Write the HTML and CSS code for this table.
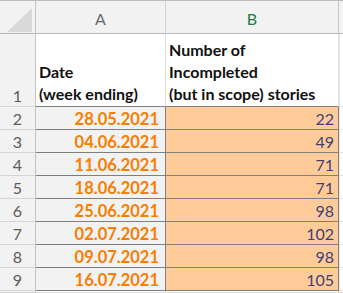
FILE: index.html
```html
<!DOCTYPE html>
<html>
<head>
<meta charset="utf-8">
<link rel="stylesheet" href="styles.css">
</head>
<body>
<div class="sheet">
  <div class="corner"><span class="tri"></span></div>
  <div class="colhead">A</div>
  <div class="colhead sel">B</div>
  <div class="colhead rest"></div>

  <div class="rowhead">1</div>
  <div class="cell title">Date<br>(week ending)</div>
  <div class="cell title">Number of<br>Incompleted<br>(but in scope) stories</div>
  <div class="cell rest"></div>

  <div class="rowhead">2</div><div class="cell calc">28.05.2021</div><div class="cell input">22</div><div class="cell rest"></div>
  <div class="rowhead">3</div><div class="cell calc">04.06.2021</div><div class="cell input">49</div><div class="cell rest"></div>
  <div class="rowhead">4</div><div class="cell calc">11.06.2021</div><div class="cell input">71</div><div class="cell rest"></div>
  <div class="rowhead">5</div><div class="cell calc">18.06.2021</div><div class="cell input">71</div><div class="cell rest"></div>
  <div class="rowhead">6</div><div class="cell calc">25.06.2021</div><div class="cell input">98</div><div class="cell rest"></div>
  <div class="rowhead">7</div><div class="cell calc">02.07.2021</div><div class="cell input">102</div><div class="cell rest"></div>
  <div class="rowhead">8</div><div class="cell calc">09.07.2021</div><div class="cell input">98</div><div class="cell rest"></div>
  <div class="rowhead">9</div><div class="cell calc">16.07.2021</div><div class="cell input">105</div><div class="cell rest"></div>

  <div class="rowhead"></div><div class="cell blank"></div><div class="cell blank"></div><div class="cell rest"></div>
</div>
</body>
</html>
```
FILE: styles.css
```css
html, body {
  margin: 0;
  padding: 0;
  background: #ffffff;
}
body {
  font-family: Lato, "Liberation Sans", sans-serif;
  overflow: hidden;
}
.sheet {
  display: grid;
  grid-template-columns: 36px 130px 173px 4px;
  grid-template-rows: 34px 73px repeat(8, 23px) 2px;
  width: 343px;
  height: 293px;
  overflow: hidden;
}
.sheet > div {
  box-sizing: border-box;
}
.corner {
  background: #f2f2f2;
  border-top: 1px solid #bdbdbd;
  border-right: 1px solid #c4c4c4;
  border-bottom: 1px solid #b9b9b9;
  position: relative;
}
.tri {
  position: absolute;
  left: 7px;
  top: 7px;
  width: 25px;
  height: 24px;
  background: #d9d9d9;
  clip-path: polygon(100% 0, 100% 100%, 0 100%);
}
.colhead {
  background: #f2f2f2;
  border-top: 1px solid #bdbdbd;
  border-right: 1px solid #d4d4d4;
  border-bottom: 1px solid #b9b9b9;
  display: flex;
  align-items: center;
  justify-content: center;
  font-size: 16px;
  color: #6b6b6b;
  padding-top: 2px;
}
.colhead.sel {
  color: #1f7a45;
  border-right-color: #c4c4c4;
}
.colhead.rest {
  border-right: none;
}
.rowhead {
  background: #f2f2f2;
  border-right: 1px solid #c4c4c4;
  border-bottom: 1px solid #d4d4d4;
  color: #5c5c5c;
  font-size: 16px;
  display: flex;
  align-items: flex-end;
  justify-content: center;
  padding-bottom: 1px;
}
.cell {
  border-right: 1px solid #e0e0e0;
  border-bottom: 1px solid #e0e0e0;
}
.cell.title {
  font-weight: 700;
  font-size: 16px;
  line-height: 22px;
  color: #111;
  display: flex;
  align-items: flex-end;
  padding: 0 0 1px 3px;
  border-bottom-color: #7f7f7f;
}
.cell.calc {
  background: #f2f2f2;
  color: #fa7d00;
  font-weight: 700;
  font-size: 16.5px;
  line-height: 22px;
  text-align: right;
  padding: 1px 6px 0 0;
  border-right-color: #7f7f7f;
  border-bottom-color: #7f7f7f;
}
.cell.input {
  background: #ffcc99;
  color: #3f3f76;
  font-size: 16px;
  line-height: 22px;
  text-align: right;
  padding: 1px 4px 0 0;
  border-right-color: #7f7f7f;
  border-bottom-color: #7f7f7f;
}
.cell.rest {
  border-right: none;
  border-left: 1px solid #e6e6e6;
}
.cell.blank {
  background: #ffffff;
}
```
